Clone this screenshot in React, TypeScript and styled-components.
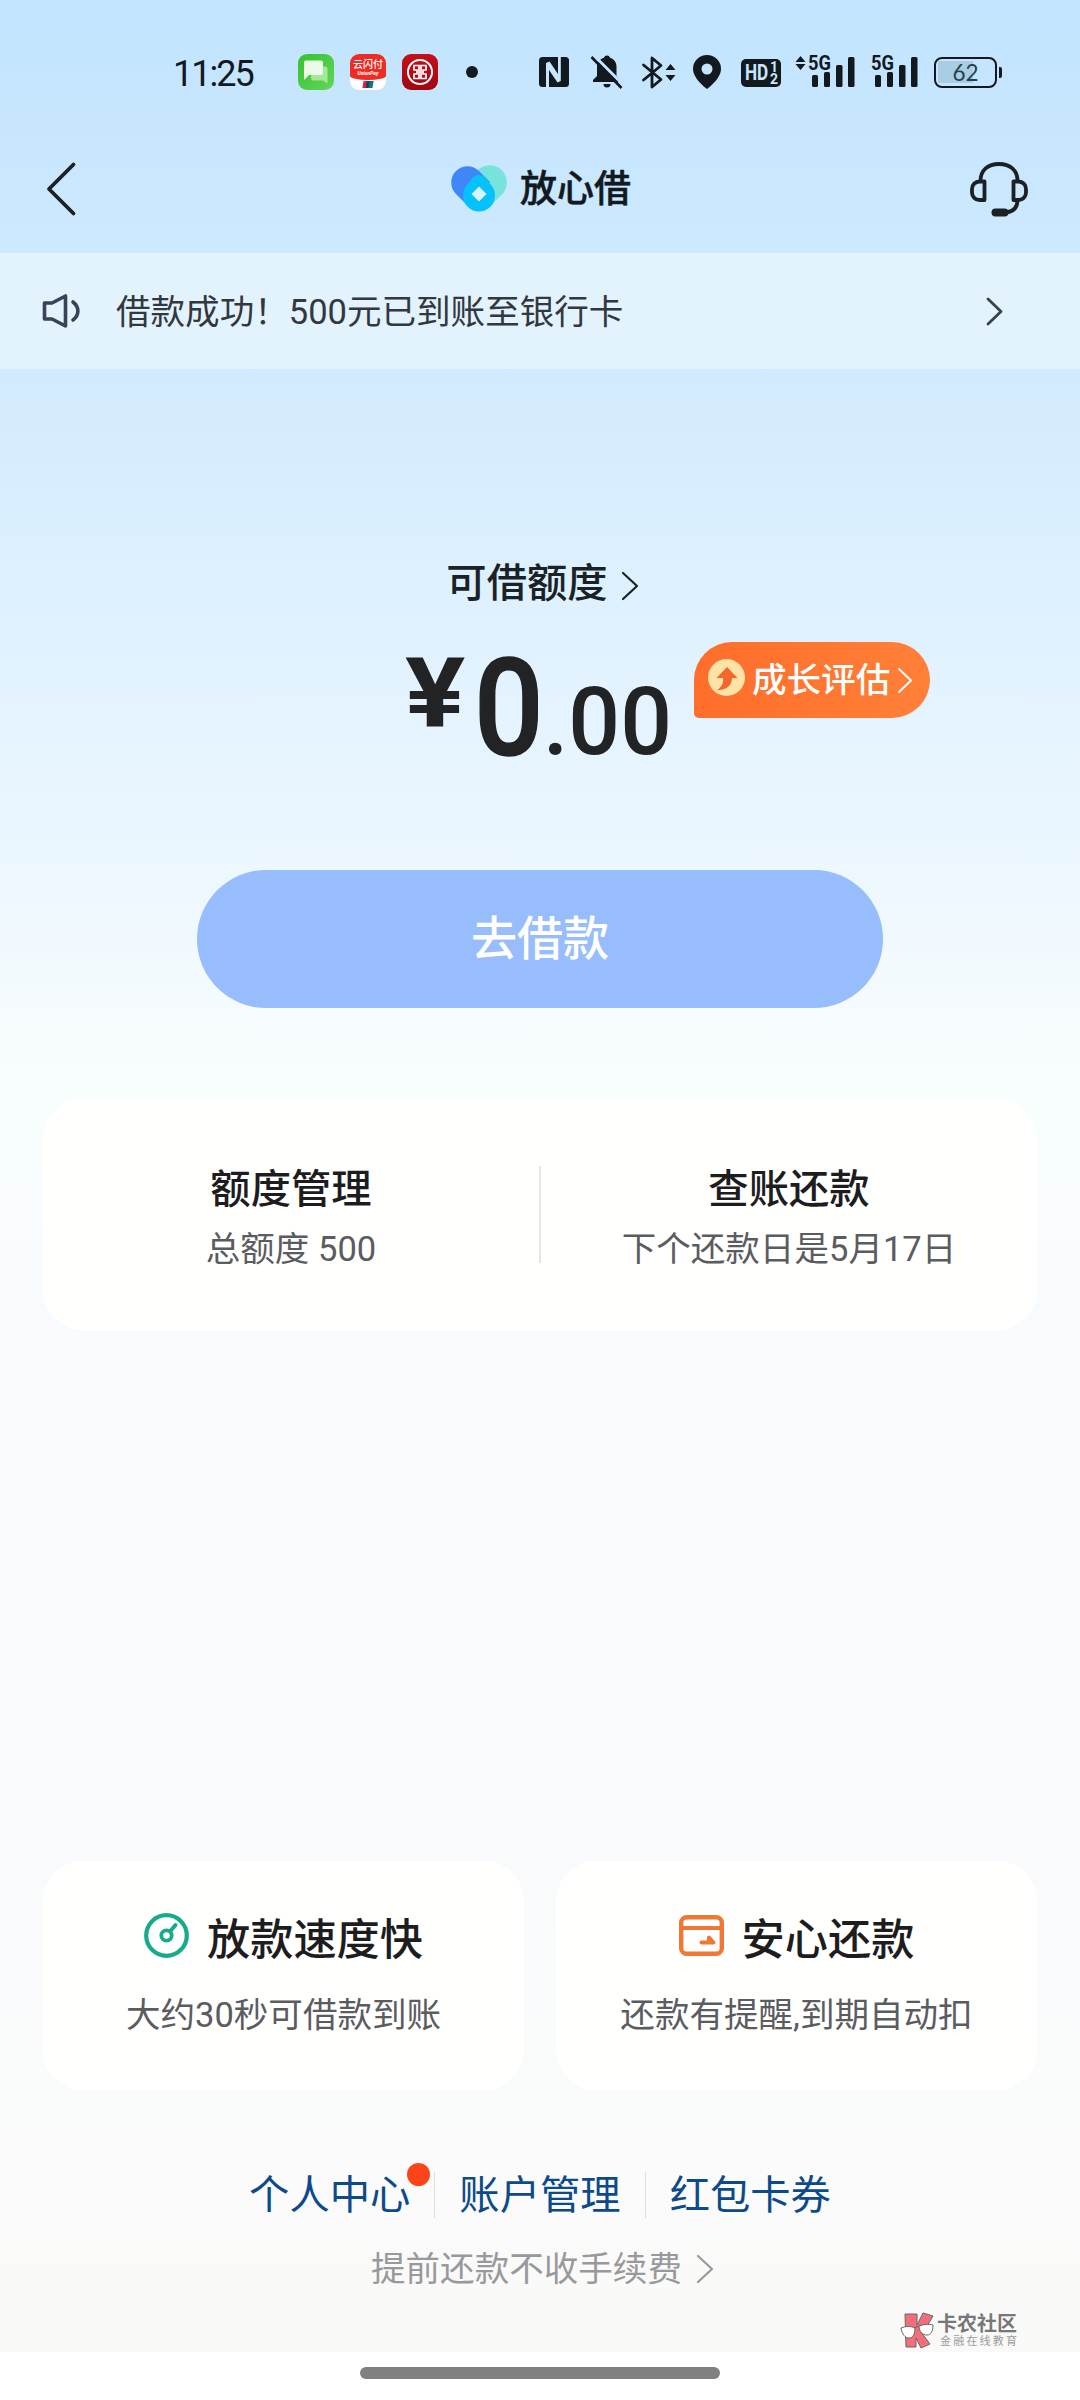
import React from "react";
import styled, { createGlobalStyle } from "styled-components";

const sans = `Roboto, "Noto Sans CJK SC", sans-serif`;

const GlobalStyle = createGlobalStyle`
  * { box-sizing: border-box; }
  html, body { margin: 0; padding: 0; background: #fff; }
  body { font-family: ${sans}; }
  svg { display: block; flex: none; overflow: visible; }
`;

const Screen = styled.main`
  position: relative;
  width: 1080px;
  height: 2400px;
  overflow: hidden;
  display: flex;
  flex-direction: column;
  background: linear-gradient(
    180deg,
    #c2e4fe 0px,
    #cbe8fe 220px,
    #d4ebfe 400px,
    #dcf0fe 560px,
    #e6f4ff 740px,
    #ecf7fe 870px,
    #f5fbfe 1010px,
    #f8fdfe 1090px,
    #f8fbfe 1380px,
    #f9fafc 1850px,
    #fafbfa 2200px,
    #f9f9f7 2352px
  );
`;

/* ---------- status bar ---------- */

const StatusBar = styled.header`
  height: 125px;
  padding: 19px 83px 0 173px;
  display: flex;
  align-items: center;
  justify-content: space-between;
`;

const StatusGroup = styled.div<{ $gap: number }>`
  display: flex;
  align-items: center;
  gap: ${(p) => p.$gap}px;
`;

const Clock = styled.span`
  width: 109px;
  font: 400 36px/44px Roboto, sans-serif;
  letter-spacing: -2px;
  color: #12191f;
  padding-top: 3px;
  white-space: nowrap;
`;

const SystemIcons = styled.div`
  display: flex;
  align-items: center;
`;

const Slot = styled.div<{ $before?: number }>`
  margin-left: ${(p) => p.$before ?? 0}px;
`;

const AppTile = styled.div<{ $bg: string }>`
  width: 36px;
  height: 36px;
  border-radius: 9px;
  overflow: hidden;
  background: ${(p) => p.$bg};
`;

const PayTile = styled(AppTile)`
  display: flex;
  flex-direction: column;
  align-items: center;
`;

const PayHead = styled.div`
  width: 36px;
  height: 26px;
  padding-top: 5px;
  border-radius: 0 0 50% 50% / 0 0 4px 4px;
  background: #ee2b24;
  color: #fff;
  text-align: center;
  font: 500 10px/12px ${sans};
  white-space: nowrap;
`;

const PaySub = styled.div`
  font: italic 700 5px/5px Roboto, sans-serif;
`;

const PayMark = styled.div`
  width: 10px;
  height: 7px;
  margin-top: 1px;
  transform: skewX(-10deg);
  background: linear-gradient(90deg, #e3213a 0 33%, #14406b 33% 60%, #067a78 60%);
`;

/* ---------- navigation ---------- */

const NavBar = styled.nav`
  height: 128px;
  padding: 0 52px 0 47px;
  display: grid;
  grid-template-columns: 1fr auto 1fr;
  align-items: center;
`;

const Brand = styled.h1`
  margin: 0;
  padding-left: 7px;
  display: flex;
  align-items: center;
  gap: 13px;
  font: 500 37px/48px ${sans};
  color: #12191f;
  -webkit-text-stroke: 0.5px #12191f;
`;

const BrandName = styled.span`
  padding-top: 2px;
`;

const NavEnd = styled.div`
  justify-self: end;
`;

/* ---------- notice ---------- */

const Notice = styled.section`
  height: 116px;
  padding: 0 78px 0 42px;
  display: flex;
  align-items: center;
  background: #e2f3fe;
`;

const NoticeText = styled.p`
  flex: 1;
  margin: 2px 0 0 36px;
  font: 400 34.56px/48px ${sans};
  color: #32383e;
`;

/* ---------- hero ---------- */

const Hero = styled.section`
  height: 639px;
  padding-top: 191px;
  display: flex;
  flex-direction: column;
`;

const LimitTitle = styled.h2`
  margin: 0;
  padding-left: 4px;
  height: 48px;
  display: flex;
  align-items: center;
  justify-content: center;
  gap: 14px;
  font: 500 40.32px/48px ${sans};
  color: #1b2226;
`;

const LimitChevron = styled.span`
  padding-top: 3px;
`;

const AmountRow = styled.div`
  height: 160px;
  margin-top: 12px;
  padding-left: 405px;
  display: flex;
  align-items: flex-start;
  color: #222325;
`;

const Yen = styled.span`
  width: 69px;
  font: 700 97px/114px Roboto, sans-serif;
  margin-top: 16px;
  transform: scaleX(1.16);
  transform-origin: left center;
`;

const Whole = styled.span`
  width: 69px;
  font: 500 136px/160px Roboto, sans-serif;
  margin-top: 9px;
  -webkit-text-stroke: 1.5px #222325;
  transform: scaleX(0.9);
  transform-origin: left center;
`;

const Cents = styled.span`
  width: 151px;
  font: 500 94px/110px Roboto, sans-serif;
  margin-top: 47px;
  transform: scaleX(0.97);
  transform-origin: left center;
`;

const GrowthBadge = styled.a`
  width: 236px;
  height: 76px;
  margin-top: 22px;
  padding-left: 14px;
  display: flex;
  align-items: center;
  border-radius: 38px 38px 38px 5px;
  background: linear-gradient(90deg, #ff6d2b, #ff8038);
  color: #fff;
  font: 500 34.56px/44px ${sans};
  white-space: nowrap;
`;

const BadgeIcon = styled.span`
  margin-top: -5px;
`;

const BadgeText = styled.span`
  margin: 0 8px 0 7px;
`;

const BorrowButton = styled.button`
  width: 686px;
  height: 138px;
  margin: 90px auto 0;
  padding: 0;
  border: 0;
  border-radius: 69px;
  background: #97bdfd;
  color: #fff;
  font: 500 46.08px/60px ${sans};
`;

/* ---------- cards ---------- */

const Card = styled.section`
  border-radius: 40px;
  background: #fffffe;
`;

const AccountCard = styled(Card)`
  height: 231px;
  margin: 91px 43px 0;
  padding-top: 67px;
  display: grid;
  grid-template-columns: 1fr 2px 1fr;
  align-items: start;
`;

const AccountItem = styled.div`
  text-align: center;
`;

const ItemTitle = styled.h3`
  margin: 0;
  font: 500 40.32px/48px ${sans};
  color: #1d1d1f;
`;

const ItemText = styled.p`
  margin: 11px 0 0;
  font: 400 34.56px/48px ${sans};
  color: #5b5c61;
`;

const CardDivider = styled.i`
  width: 2px;
  height: 97px;
  background: #e6e6e8;
`;

const Features = styled.div`
  margin: 531px 43px 0;
  display: grid;
  grid-template-columns: 481px 481px;
  justify-content: space-between;
`;

const FeatureCard = styled(Card)`
  height: 229px;
  padding-top: 51px;
  text-align: center;
`;

const FeatureTitle = styled.h3`
  margin: 0;
  height: 54px;
  display: flex;
  justify-content: center;
  align-items: center;
  gap: 18px;
  font: 500 43.2px/54px ${sans};
  color: #1d1d1f;
`;

const FeatureIcon = styled.span`
  margin-top: -8px;
`;

const FeatureLabel = styled.span`
  padding-top: 4px;
`;

const FeatureText = styled(ItemText)`
  margin-top: 25px;
`;

/* ---------- footer ---------- */

const Links = styled.div`
  height: 46px;
  margin-top: 82px;
  display: flex;
  align-items: center;
  justify-content: center;
`;

const FooterLink = styled.a`
  position: relative;
  padding: 1px 24px 0;
  font: 400 40.32px/46px ${sans};
  color: #0c4a8a;
`;

const LinkDivider = styled.i`
  width: 1px;
  height: 46px;
  background: #dcdee1;
`;

const UnreadDot = styled.i`
  position: absolute;
  top: -9px;
  right: 4px;
  width: 23px;
  height: 23px;
  border-radius: 50%;
  background: #fd4318;
`;

const FeeNote = styled.div`
  height: 40px;
  margin-top: 31px;
  padding-left: 4px;
  display: flex;
  align-items: center;
  justify-content: center;
  gap: 15px;
  font: 400 34.56px/40px ${sans};
  color: #98999c;
`;

const HomeArea = styled.footer`
  height: 48px;
  margin-top: auto;
  padding-top: 15px;
  background: #fff;
`;

const HomeHandle = styled.div`
  width: 360px;
  height: 12px;
  margin: 0 auto;
  border-radius: 6px;
  background: #808080;
`;

const Watermark = styled.div`
  position: absolute;
  left: 900px;
  top: 2312px;
  display: flex;
  gap: 3px;
`;

const WatermarkName = styled.div`
  padding-top: 1px;
  font: 700 20px/22px ${sans};
  color: #77787a;
`;

const WatermarkTag = styled.div`
  padding-left: 3px;
  font: 400 11px/14px ${sans};
  letter-spacing: 2.2px;
  color: #9b9c9d;
`;

/* ---------- drawings ---------- */

const INK = "#12191f";

const Chevron = ({ w, h, stroke, color }: { w: number; h: number; stroke: number; color: string }) => (
  <svg width={w} height={h} viewBox={`0 0 ${w} ${h}`} fill="none">
    <path
      d={`M1 1 L${w - 1} ${h / 2} L1 ${h - 1}`}
      stroke={color}
      strokeWidth={stroke}
      strokeLinecap="round"
      strokeLinejoin="round"
    />
  </svg>
);

const MessagesArt = () => (
  <svg width="36" height="36" viewBox="0 0 36 36">
    <path d="M14 12.500h13a2.500 2.500 0 0 1 2.500 2.500V29.500l-4.500-3H15.500a2.500 2.500 0 0 1-2.500-2.500z" fill="#a5e79c" />
    <path d="M8 6.500h15a2 2 0 0 1 2 2v10a2.500 2.500 0 0 1-2.500 2.500H11l-5 5V8.500a2 2 0 0 1 2-2z" fill="#ecfbe9" />
  </svg>
);

const BankArt = () => (
  <svg width="36" height="36" viewBox="0 0 36 36" fill="none" stroke="#fff">
    <circle cx="18" cy="18" r="12" strokeWidth="2" />
    <path d="M17 11.500h-5v4.500h3v4h-3v4.500h5zM19 11.500h5v4.500h-3v4h3v4.500h-5z" strokeWidth="1.700" />
  </svg>
);

const NfcArt = () => (
  <svg width="30" height="30" viewBox="0 0 30 30">
    <rect width="30" height="30" rx="3.500" fill={INK} />
    <path d="M7 30V6l3.500-1.500L19 17V0h2.800v24l-3.300 1.500L10 13v17z" fill="#c5e6fe" />
  </svg>
);

const MutedBellArt = () => (
  <svg width="32" height="34" viewBox="0 0 32 34">
    <path d="M16 .5a3 3 0 0 1 3 2.300c4 1.200 6.500 4.500 6.500 9V21l3.500 4v2H2v-2l4-4v-9.200c0-4.500 3-7.800 7-9A3 3 0 0 1 16 .5z" fill={INK} />
    <path d="M12.500 29h7a3.500 3.500 0 0 1-7 0z" fill={INK} />
    <path d="M2.500 0 33.500 31" stroke="#c5e6fe" strokeWidth="3" />
    <path d="M.5 2 30.500 33" stroke={INK} strokeWidth="2.600" />
  </svg>
);

const BluetoothArt = () => (
  <svg width="34" height="33" viewBox="0 0 34 33" fill="none">
    <path d="M1.500 9 19 23.500l-9 7.500V2l9 7.500L1.500 24" stroke={INK} strokeWidth="2.800" strokeLinejoin="round" strokeLinecap="round" />
    <path d="M28.500 8l5 6h-10zM28.500 25l5-6h-10z" fill={INK} />
  </svg>
);

const PinArt = () => (
  <svg width="28" height="34" viewBox="0 0 28 34">
    <path
      fillRule="evenodd"
      d="M14 0a14 14 0 0 1 14 14c0 6-5 13-14 20C5 27 0 20 0 14A14 14 0 0 1 14 0zm0 8.500a5.500 5.500 0 1 0 0 11 5.500 5.500 0 0 0 0-11z"
      fill={INK}
    />
  </svg>
);

const HdBox = styled.div`
  width: 40px;
  height: 28px;
  margin-top: 2px;
  padding-left: 4px;
  border-radius: 5px;
  background: ${INK};
  color: #c8e7fe;
  display: flex;
  align-items: center;
  gap: 1px;
  font: 700 22px/28px Roboto, sans-serif;
`;

const HdWord = styled.span`
  width: 24px;
  transform: scaleX(0.78);
  transform-origin: left center;
`;

const HdDigits = styled.span`
  display: flex;
  flex-direction: column;
  font: 700 14px/12px Roboto, sans-serif;
`;

const SignalBox = styled.div<{ $w: number }>`
  position: relative;
  width: ${(p) => p.$w}px;
  height: 32px;
`;

const SignalLabel = styled.span<{ $left: number }>`
  position: absolute;
  left: ${(p) => p.$left}px;
  top: -1px;
  font: 700 21px/16px Roboto, sans-serif;
  color: ${INK};
  transform: scaleX(0.87);
  transform-origin: left center;
`;

const Signal = ({ arrows }: { arrows?: boolean }) => {
  const w = arrows ? 60 : 46;
  const x = w - 43;
  return (
    <SignalBox $w={w}>
      <svg width={w} height="32" viewBox={`0 0 ${w} 32`} fill={INK}>
        {arrows && <path d="M5.500 0l5 6H.5zM5.500 14l5-6H.5z" />}
        <rect x={x} y="19" width="6" height="12" rx="1.500" />
        <rect x={x + 12} y="16" width="6" height="15" rx="1.500" />
        <rect x={x + 24} y="9" width="6.500" height="22" rx="1.500" />
        <rect x={x + 36} y="1" width="6.500" height="30" rx="1.500" />
      </svg>
      <SignalLabel $left={arrows ? 13 : -1}>5G</SignalLabel>
    </SignalBox>
  );
};

const Battery = styled.div`
  position: relative;
  width: 63px;
  height: 31px;
  margin-left: 16px;
  border: 2.500px solid ${INK};
  border-radius: 8px;
  padding: 2px;
  background: linear-gradient(90deg, #a9cde2 0 35px, transparent 35px) no-repeat 2px 2px / 53px 22px;
  color: #24404f;
  text-align: center;
  font: 400 22.500px/23px Lato, sans-serif;

  &::after {
    content: "";
    position: absolute;
    right: -7px;
    top: 8px;
    width: 3px;
    height: 11px;
    border-radius: 0 2px 2px 0;
    background: ${INK};
  }
`;

const BackArt = () => (
  <svg width="30" height="52" viewBox="0 0 30 52" fill="none">
    <path d="M26.500 1.500 2 26l24.500 24.500" stroke="#1b2024" strokeWidth="3.800" strokeLinecap="round" strokeLinejoin="round" />
  </svg>
);

const HeartArt = () => (
  <svg width="56" height="44" viewBox="0 0 56 44">
    <path d="M26 3.500A16 16 0 0 1 51 27.500L40 38 18 16z" fill="#77e4dc" />
    <path d="M28 4a16 16 0 0 0-23 23l12 12L39 15z" fill="#3f87f6" />
    <path d="M28 8c3 0 5 1 7 3.500l5.500 7a16 16 0 1 1-25 0l5.500-7C23 9 25 8 28 8z" fill="#05c3fa" />
    <path d="M28 19.500l7.500 7.500-7.500 7.500-7.500-7.500z" fill="#d8f5ff" />
  </svg>
);

const HeadsetArt = () => (
  <svg width="58" height="55" viewBox="0 0 58 55" fill="none" stroke="#1b2024" strokeWidth="3.800">
    <path d="M10.500 19C10.500 8 18 2 29 2s18.500 6 18.500 17" />
    <path d="M14.500 19.500v18.500H9.500A7.500 7.500 0 0 1 2 30.500V27a7.500 7.500 0 0 1 7.500-7.500zM43.500 19.500v18.500h5A7.500 7.500 0 0 0 56 30.500V27a7.500 7.500 0 0 0-7.500-7.500z" strokeLinejoin="round" />
    <path d="M47.500 38c0 8-4 11.500-11 12.500" />
    <rect x="21.500" y="46.500" width="17" height="8" rx="4" fill="#1b2024" stroke="none" />
  </svg>
);

const SpeakerArt = () => (
  <svg width="38" height="34" viewBox="0 0 38 34" fill="none" stroke="#3a4258" strokeWidth="3.600" strokeLinejoin="round" strokeLinecap="round">
    <path d="M2.500 9h7.500L23.500 2v30L10 25H2.500z" />
    <path d="M31 8c6.500 5 6.500 13 0 18" />
  </svg>
);

const GrowthArt = () => (
  <svg width="37" height="37" viewBox="0 0 37 37">
    <circle cx="18.500" cy="18.500" r="18.500" fill="#ffe2a6" />
    <path d="M19 8 29.500 19H24c0 7-5 12-15.500 12.500C14 28 15.500 24 15 19H8.500z" fill="#f2682a" />
  </svg>
);

const GaugeArt = () => (
  <svg width="45" height="45" viewBox="0 0 45 45" fill="none" stroke="#18ab8b">
    <circle cx="22.500" cy="22.500" r="20.300" strokeWidth="4.200" />
    <circle cx="22.500" cy="22.500" r="5.200" strokeWidth="3.800" />
    <path d="M26 18.500l5.500-6.500" strokeWidth="4" strokeLinecap="round" />
  </svg>
);

const WalletArt = () => (
  <svg width="45" height="41" viewBox="0 0 45 41" fill="none" stroke="#f17834">
    <rect x="2.200" y="2.200" width="40.600" height="36.600" rx="5.500" strokeWidth="4.400" />
    <path d="M2 13h41" strokeWidth="4" />
    <path d="M22.500 27.500h12l-4.500-5v5" strokeWidth="4" strokeLinecap="round" strokeLinejoin="round" />
  </svg>
);

const WatermarkArt = () => (
  <svg width="34" height="36" viewBox="0 0 34 36" stroke="#6d6466" strokeWidth="1">
    <path d="M5 2h12v11l6-12 10 3-7 12-5 4 9 12-9 4-5-10v9H6z" fill="#f26e7a" />
    <path d="M1 16c5-2 10-2 14 0 0 6-2 10-6 10s-7-4-8-10zM19 14c5-2 10-2 14-1 0 6-2 10-6 10s-8-3-8-9z" fill="#fff" />
    <path d="M14 16l5-2" fill="none" />
  </svg>
);

const accountItems = [
  { title: "额度管理", text: "总额度 500" },
  { title: "查账还款", text: "下个还款日是5月17日" },
];

const features = [
  { title: "放款速度快", text: "大约30秒可借款到账", art: <GaugeArt /> },
  { title: "安心还款", text: "还款有提醒,到期自动扣", art: <WalletArt /> },
];

const links = [
  { label: "个人中心", unread: true },
  { label: "账户管理", unread: false },
  { label: "红包卡券", unread: false },
];

export default function App() {
  return (
    <>
      <GlobalStyle />
      <Screen>
        <StatusBar>
          <StatusGroup $gap={16}>
            <Clock>11:25</Clock>
            <AppTile $bg="linear-gradient(135deg, #35c22f, #62d658)">
              <MessagesArt />
            </AppTile>
            <PayTile $bg="#fff">
              <PayHead>
                云闪付
                <PaySub>UnionPay</PaySub>
              </PayHead>
              <PayMark />
            </PayTile>
            <AppTile $bg="linear-gradient(180deg, #c5101c, #a10712)">
              <BankArt />
            </AppTile>
            <Slot $before={12}>
              <svg width="12" height="12" viewBox="0 0 12 12">
                <circle cx="6" cy="6" r="6" fill={INK} />
              </svg>
            </Slot>
          </StatusGroup>
          <SystemIcons>
            <NfcArt />
            <Slot $before={22}><MutedBellArt /></Slot>
            <Slot $before={19}><BluetoothArt /></Slot>
            <Slot $before={17}><PinArt /></Slot>
            <Slot $before={20}>
              <HdBox>
                <HdWord>HD</HdWord>
                <HdDigits>
                  <span>1</span>
                  <span>2</span>
                </HdDigits>
              </HdBox>
            </Slot>
            <Slot $before={14}><Signal arrows /></Slot>
            <Slot $before={17}><Signal /></Slot>
            <Battery>62</Battery>
          </SystemIcons>
        </StatusBar>

        <NavBar>
          <BackArt />
          <Brand>
            <HeartArt />
            <BrandName>放心借</BrandName>
          </Brand>
          <NavEnd>
            <HeadsetArt />
          </NavEnd>
        </NavBar>

        <Notice>
          <SpeakerArt />
          <NoticeText>借款成功！500元已到账至银行卡</NoticeText>
          <Chevron w={15} h={27} stroke={2.8} color="#3b4146" />
        </Notice>

        <Hero>
          <LimitTitle>
            可借额度
            <LimitChevron>
              <Chevron w={16} h={28} stroke={2.2} color="#1b2226" />
            </LimitChevron>
          </LimitTitle>
          <AmountRow>
            <Yen>¥</Yen>
            <Whole>0</Whole>
            <Cents>.00</Cents>
            <GrowthBadge>
              <BadgeIcon>
                <GrowthArt />
              </BadgeIcon>
              <BadgeText>成长评估</BadgeText>
              <Chevron w={14} h={25} stroke={2} color="#fff" />
            </GrowthBadge>
          </AmountRow>
          <BorrowButton>去借款</BorrowButton>
        </Hero>

        <AccountCard>
          <AccountItem>
            <ItemTitle>{accountItems[0].title}</ItemTitle>
            <ItemText>{accountItems[0].text}</ItemText>
          </AccountItem>
          <CardDivider />
          <AccountItem>
            <ItemTitle>{accountItems[1].title}</ItemTitle>
            <ItemText>{accountItems[1].text}</ItemText>
          </AccountItem>
        </AccountCard>

        <Features>
          {features.map((f) => (
            <FeatureCard key={f.title}>
              <FeatureTitle>
                <FeatureIcon>{f.art}</FeatureIcon>
                <FeatureLabel>{f.title}</FeatureLabel>
              </FeatureTitle>
              <FeatureText>{f.text}</FeatureText>
            </FeatureCard>
          ))}
        </Features>

        <Links>
          {links.map((l, i) => (
            <React.Fragment key={l.label}>
              {i > 0 && <LinkDivider />}
              <FooterLink>
                {l.label}
                {l.unread && <UnreadDot />}
              </FooterLink>
            </React.Fragment>
          ))}
        </Links>
        <FeeNote>
          提前还款不收手续费
          <Chevron w={16} h={28} stroke={2.2} color="#98999c" />
        </FeeNote>

        <HomeArea>
          <HomeHandle />
        </HomeArea>

        <Watermark>
          <WatermarkArt />
          <div>
            <WatermarkName>卡农社区</WatermarkName>
            <WatermarkTag>金融在线教育</WatermarkTag>
          </div>
        </Watermark>
      </Screen>
    </>
  );
}
